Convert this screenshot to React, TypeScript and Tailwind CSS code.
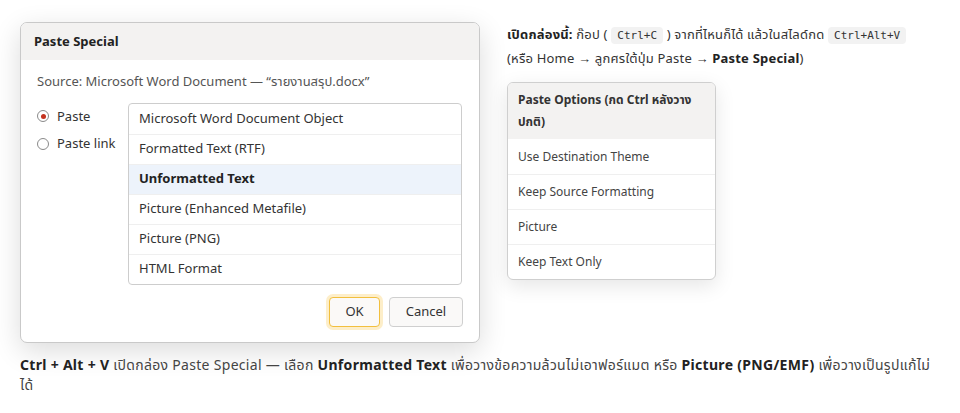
import { Fragment } from 'react'

const formats = [
  'Microsoft Word Document Object',
  'Formatted Text (RTF)',
  'Unformatted Text',
  'Picture (Enhanced Metafile)',
  'Picture (PNG)',
  'HTML Format',
]

const pasteOptions = ['Use Destination Theme', 'Keep Source Formatting', 'Picture', 'Keep Text Only']

function Kbd({ children }: { children: string }) {
  return (
    <code className="rounded-[4px] bg-[#f2f2f2] px-[6px] py-[2px] font-['DejaVu_Sans_Mono',monospace] text-[11px] leading-[14px] tracking-normal text-[#333]">
      {children}
    </code>
  )
}

function Radio({ checked, label }: { checked?: boolean; label: string }) {
  return (
    <label className="flex items-center gap-[8px] text-[13px] text-[#333]">
      <span className="flex h-[12px] w-[12px] items-center justify-center rounded-full border border-[#8a8a8a] bg-white">
        {checked && <span className="h-[5px] w-[5px] rounded-full bg-[#c4321f]" />}
      </span>
      {label}
    </label>
  )
}

export default function App() {
  const selected = 2

  return (
    <div className="h-[413px] w-[960px] overflow-hidden bg-white font-['Noto_Sans','Noto_Sans_Thai',sans-serif] text-[#333]">
      <div className="flex gap-[27px] px-[20px] pt-[22px]">
        {/* Paste Special dialog */}
        <div className="w-[460px] shrink-0 overflow-hidden rounded-[7px] border border-[#c9c9c9] bg-white shadow-[0_8px_28px_rgba(0,0,0,0.14)]">
          <div className="flex h-[37px] items-center bg-[#f3f2f1] px-[13px] text-[13px] font-bold text-[#222]">
            Paste Special
          </div>
          <div className="px-[16px] pb-[15px] pt-[12px]">
            <div className="text-[13px] text-[#555]">Source: Microsoft Word Document — “รายงานสรุป.docx”</div>
            <div className="mt-[11px] flex">
              <div className="flex w-[91px] flex-col gap-[8px] pt-[4px]">
                <Radio checked label="Paste" />
                <Radio label="Paste link" />
              </div>
              <div className="w-[334px] overflow-hidden rounded-[4px] border border-[#cdcdcd]">
                {formats.map((f, i) => (
                  <div
                    key={f}
                    className={`flex h-[30px] items-center px-[10px] text-[13px] ${
                      i > 0 ? 'border-t border-[#efefef]' : ''
                    } ${i === selected ? 'bg-[#edf3fb] font-bold text-[#222]' : 'text-[#333]'}`}
                  >
                    {f}
                  </div>
                ))}
              </div>
            </div>
            <div className="mt-[12px] flex justify-end gap-[9px]">
              <button className="h-[30px] w-[51px] rounded-[4px] border border-[#f2bf3e] bg-[#fbf9f7] text-[13px] text-[#333] shadow-[0_0_0_3px_rgba(250,205,100,0.35)]">
                OK
              </button>
              <button className="h-[30px] w-[74px] rounded-[4px] border border-[#cfcfcf] bg-[#faf9f8] text-[13px] text-[#333]">
                Cancel
              </button>
            </div>
          </div>
        </div>

        {/* Right column */}
        <div className="flex-1">
          <p className="text-[13px] leading-[24px] tracking-[0.2px] text-[#333]">
            <b className="text-[#222]">เปิดกล่องนี้:</b> ก๊อป ( <Kbd>Ctrl+C</Kbd> ) จากที่ไหนก็ได้ แล้วในสไลด์กด{' '}
            <Kbd>Ctrl+Alt+V</Kbd>
            <br />
            (หรือ Home → ลูกศรใต้ปุ่ม Paste → <b className="text-[#222]">Paste Special</b>)
          </p>
          <div className="mt-[12px] w-[209px] overflow-hidden rounded-[6px] border border-[#cfcfcf] bg-white shadow-[0_6px_20px_rgba(0,0,0,0.1)]">
            <div className="bg-[#f3f2f1] px-[10px] py-[6px] text-[12px] font-bold leading-[22px] text-[#333]">
              Paste Options (กด Ctrl หลังวาง ปกติ)
            </div>
            {pasteOptions.map((o, i) => (
              <Fragment key={o}>
                <div
                  className={`flex h-[35px] items-center px-[10px] text-[12px] text-[#444] ${
                    i > 0 ? 'border-t border-[#efefef]' : ''
                  }`}
                >
                  {o}
                </div>
              </Fragment>
            ))}
          </div>
        </div>
      </div>

      <p className="mt-[12px] px-[20px] text-[14px] leading-[20px] tracking-[0.3px] text-[#444]">
        <b className="text-[#222]">Ctrl + Alt + V</b> เปิดกล่อง Paste Special — เลือก{' '}
        <b className="text-[#222]">Unformatted Text</b> เพื่อวางข้อความล้วนไม่เอาฟอร์แมต หรือ{' '}
        <b className="text-[#222]">Picture (PNG/EMF)</b> เพื่อวางเป็นรูปแก้ไม่
        <br />
        ได้
      </p>
    </div>
  )
}
